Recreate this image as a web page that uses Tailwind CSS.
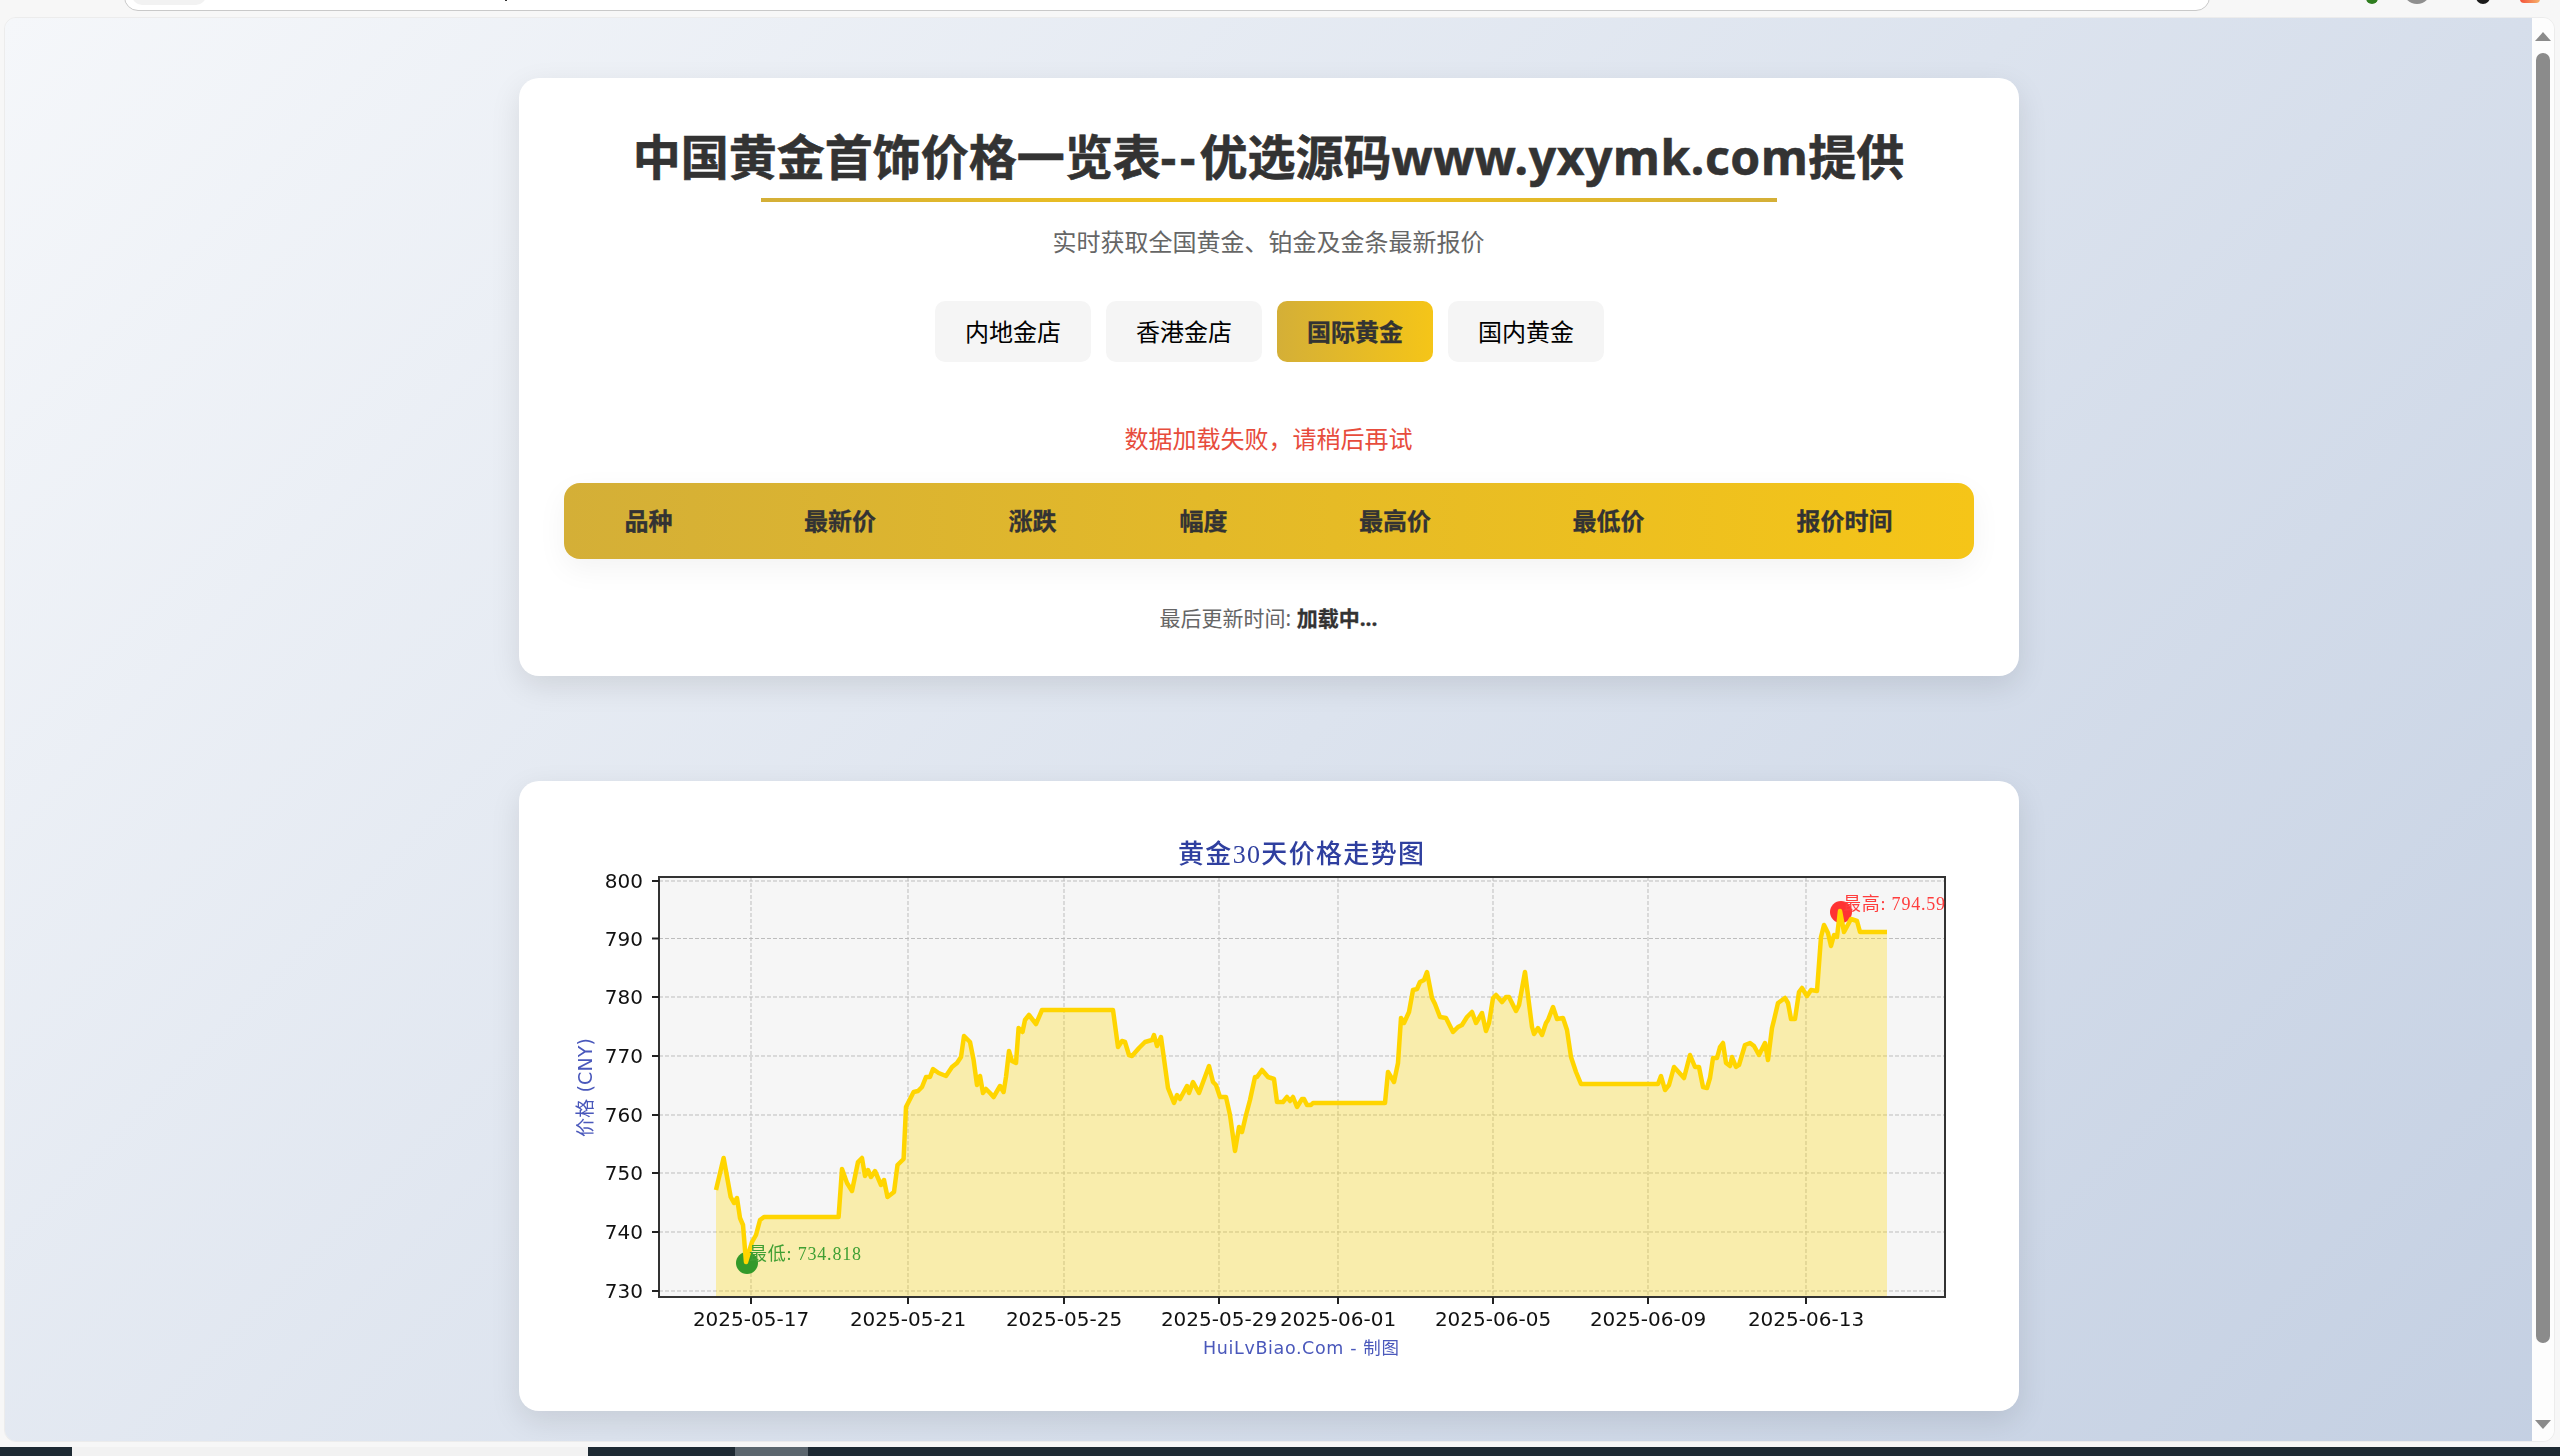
<!doctype html>
<html lang="zh-CN">
<head>
<meta charset="utf-8">
<title>中国黄金首饰价格一览表</title>
<script src="https://cdn.jsdelivr.net/npm/@tailwindcss/browser@4"></script>
</head>
<body class="h-screen overflow-hidden bg-[#f7f7f7] font-['Noto_Sans','Noto_Sans_CJK_SC',sans-serif]">
<div class="flex h-[1456px] w-[2560px] flex-col">
  <!-- browser chrome remnant -->
  <div class="relative h-[17px] shrink-0">
    <div class="absolute left-[124px] top-[-20px] h-[31px] w-[2086px] rounded-b-[14px] border-[1.5px] border-[#c9c9c9] bg-white"></div>
    <div class="absolute left-[132px] top-[-20px] h-[25px] w-[74px] rounded-b-[10px] bg-[#f2f2f2]"></div>
    <div class="absolute left-[505px] top-0 h-[1px] w-[2px] bg-[#333]"></div>
    <div class="absolute left-[2366px] top-[-8px] size-[12px] rounded-full bg-[#2f7d1f]"></div>
    <div class="absolute left-[2403px] top-[-24px] size-[28px] rounded-full bg-[#8f8f8f]"></div>
    <div class="absolute left-[2476px] top-[-10px] size-[14px] rounded-full bg-[#1b1b1b]"></div>
    <div class="absolute left-[2520px] top-[-6px] h-[9px] w-[20px] rounded-[4px] bg-[linear-gradient(90deg,#f4523b,#f6b26b)]"></div>
  </div>

  <!-- browser viewport -->
  <div class="ml-[4px] flex h-[1425px] w-[2551px] shrink-0 overflow-hidden rounded-[12px] border border-[#ececec]">
    <main class="h-[1513px] w-[2527px] shrink-0 self-start overflow-hidden bg-[linear-gradient(135deg,#f5f7fa_0%,#c3cfe2_100%)] pt-[60px]">
      <section class="mx-auto h-[598px] w-[1500px] rounded-[20px] bg-white px-[45px] pt-[43px] text-center shadow-[0_10px_30px_rgba(0,0,0,0.1)]">
        <h1 class="text-[48px] font-bold leading-[72px] text-[#333] [-webkit-text-stroke:0.6px_#333]">中国黄金首饰价格一览表<span class="tracking-[4px]">--</span>优选源码<span class="tracking-[0.6px]">www.yxymk.com</span>提供</h1>
        <div class="mx-auto mt-[5px] h-[4px] w-[1016px] bg-[linear-gradient(90deg,#d4af37,#f5c518,#d4af37)]"></div>
        <p class="mt-[22px] text-[24px] leading-[36px] text-[#666]">实时获取全国黄金、铂金及金条最新报价</p>
        <div class="mt-[41px] flex justify-center gap-[15px] pl-[2px]">
          <button class="h-[61px] w-[156px] rounded-[10px] bg-[#f5f5f5] text-[24px] text-black">内地金店</button>
          <button class="h-[61px] w-[156px] rounded-[10px] bg-[#f5f5f5] text-[24px] text-black">香港金店</button>
          <button class="h-[61px] w-[156px] rounded-[10px] bg-[linear-gradient(90deg,#d4af37,#f5c518)] text-[24px] font-bold text-[#333] [-webkit-text-stroke:0.3px_#333]">国际黄金</button>
          <button class="h-[61px] w-[156px] rounded-[10px] bg-[#f5f5f5] text-[24px] text-black">国内黄金</button>
        </div>
        <p class="mt-[59px] text-[24px] leading-[36px] text-[#e74c3c]">数据加载失败，请稍后再试</p>
        <div class="mt-[26px] overflow-hidden rounded-[16px] shadow-[0_10px_30px_rgba(0,0,0,0.05)]">
          <table class="w-full table-fixed border-collapse bg-[linear-gradient(90deg,#d4af37,#f5c518)]">
            <thead>
              <tr class="h-[76px] text-[24px] font-bold text-[#333] [-webkit-text-stroke:0.3px_#333]">
                <th class="w-[170px]">品种</th>
                <th class="w-[213px]">最新价</th>
                <th class="w-[172px]">涨跌</th>
                <th class="w-[170px]">幅度</th>
                <th class="w-[213px]">最高价</th>
                <th class="w-[214px]">最低价</th>
                <th class="w-[258px]">报价时间</th>
              </tr>
            </thead>
          </table>
        </div>
        <p class="mt-[43px] text-[21px] leading-[32px] text-[#666]">最后更新时间: <strong class="font-bold text-[#333] [-webkit-text-stroke:0.3px_#333]">加载中...</strong></p>
      </section>

      <section class="mx-auto mt-[105px] h-[630px] w-[1500px] overflow-hidden rounded-[20px] bg-white shadow-[0_10px_30px_rgba(0,0,0,0.1)]">
        <svg class="block h-[630px] w-[1500px] blur-[0.4px]" viewBox="519 781 1500 630" xmlns="http://www.w3.org/2000/svg">
          <rect x="659" y="877" width="1286" height="420" fill="#f6f6f6"/>
          <g stroke="#bdbdbd" stroke-width="1" stroke-dasharray="4 2">
            <path d="M659 881H1945M659 938.5H1945M659 997H1945M659 1056H1945M659 1115H1945M659 1173H1945M659 1232H1945M659 1291H1945"/>
            <path d="M751 877V1297M908 877V1297M1064 877V1297M1219 877V1297M1338 877V1297M1493 877V1297M1648 877V1297M1806 877V1297"/>
          </g>
          <polygon fill="#ffd700" fill-opacity="0.3" points="716,1297 716,1190 723.6,1158 730.7,1197 734,1203 737,1198 740,1218 743,1225 746,1262 752,1242 756,1235 760,1220 764,1217 838.6,1217 842,1169 847,1183 852,1191 858,1162 862,1158 865,1176 868,1170 871,1177 875,1171 881,1185 884,1180 887.5,1197 894,1192 897.5,1165 903.6,1159 906,1107 913.6,1092 918,1091 922,1087 926,1077 930,1077 933,1069 938.6,1073 946,1076 952,1067 957,1063 961,1057 964,1036 970,1042 973.6,1060 977,1085 980,1076 983,1093 986,1089 990,1093 993.6,1097 1000,1086 1003.6,1092 1006,1077 1009,1051 1012,1061 1016,1063 1018.6,1028 1022.5,1032 1025,1020 1029,1015 1036,1024 1042,1010 1113,1010 1118,1047 1122,1041 1125,1042 1129,1055 1132,1056 1139,1048 1145,1042 1152,1040 1154,1035 1157,1046 1161,1037 1168,1088 1174,1103 1177,1095 1180,1099 1187,1086 1189,1093 1193,1082 1199,1093 1209,1066 1213,1082 1216,1085 1220,1097 1226,1097 1230,1115 1235,1151 1239,1127 1242,1132 1246,1115 1250,1100 1255,1077 1257,1077 1262,1070 1268,1077 1274,1079 1277,1102 1283,1102 1287,1097 1290,1101 1293,1097 1297,1107 1302,1099 1304,1099 1307,1105 1311,1105 1313,1103 1385,1103 1388,1072 1394,1082 1398,1063 1401,1018 1404,1023 1409,1012 1413,990 1417,989 1420,982 1424,980 1427,972 1432,998 1435,1004 1440,1017 1446,1018 1453,1032 1458,1027 1462,1025 1467,1017 1472,1012 1476,1023 1482,1013 1486,1031 1489,1023 1493,998 1496,995 1502,1002 1506,997 1509,997 1516,1011 1519,1005 1525,972 1532,1027 1534,1034 1538,1028 1542,1035 1546,1023 1548,1020 1553,1007 1557,1019 1563,1018 1567,1030 1571,1057 1576,1072 1581,1084 1658,1084 1661,1076 1665,1090 1669,1085 1674,1067 1684,1078 1690,1055 1695,1067 1699,1067 1703,1087 1707,1088 1710,1078 1713,1058 1717,1058 1720,1047 1723,1043 1726,1063 1730,1066 1732,1057 1736,1067 1739,1065 1745,1045 1750,1043 1754,1046 1759,1055 1765,1043 1768,1060 1772,1028 1774,1020 1778,1003 1785,998 1788,1003 1791,1019 1795,1019 1799,992 1802,988 1807,996 1811,990 1817,991 1821,937 1824,925 1828,933 1831,946 1834,935 1837,937 1840,911 1844,932 1851,919 1857,921 1860,932 1887,932 1887,1297"/>
          <circle cx="747" cy="1263" r="11" fill="#339a2a"/>
          <circle cx="1841" cy="912" r="11" fill="#ff3333"/>
          <polyline fill="none" stroke="#ffd500" stroke-width="4.5" stroke-linejoin="round" points="716,1190 723.6,1158 730.7,1197 734,1203 737,1198 740,1218 743,1225 746,1262 752,1242 756,1235 760,1220 764,1217 838.6,1217 842,1169 847,1183 852,1191 858,1162 862,1158 865,1176 868,1170 871,1177 875,1171 881,1185 884,1180 887.5,1197 894,1192 897.5,1165 903.6,1159 906,1107 913.6,1092 918,1091 922,1087 926,1077 930,1077 933,1069 938.6,1073 946,1076 952,1067 957,1063 961,1057 964,1036 970,1042 973.6,1060 977,1085 980,1076 983,1093 986,1089 990,1093 993.6,1097 1000,1086 1003.6,1092 1006,1077 1009,1051 1012,1061 1016,1063 1018.6,1028 1022.5,1032 1025,1020 1029,1015 1036,1024 1042,1010 1113,1010 1118,1047 1122,1041 1125,1042 1129,1055 1132,1056 1139,1048 1145,1042 1152,1040 1154,1035 1157,1046 1161,1037 1168,1088 1174,1103 1177,1095 1180,1099 1187,1086 1189,1093 1193,1082 1199,1093 1209,1066 1213,1082 1216,1085 1220,1097 1226,1097 1230,1115 1235,1151 1239,1127 1242,1132 1246,1115 1250,1100 1255,1077 1257,1077 1262,1070 1268,1077 1274,1079 1277,1102 1283,1102 1287,1097 1290,1101 1293,1097 1297,1107 1302,1099 1304,1099 1307,1105 1311,1105 1313,1103 1385,1103 1388,1072 1394,1082 1398,1063 1401,1018 1404,1023 1409,1012 1413,990 1417,989 1420,982 1424,980 1427,972 1432,998 1435,1004 1440,1017 1446,1018 1453,1032 1458,1027 1462,1025 1467,1017 1472,1012 1476,1023 1482,1013 1486,1031 1489,1023 1493,998 1496,995 1502,1002 1506,997 1509,997 1516,1011 1519,1005 1525,972 1532,1027 1534,1034 1538,1028 1542,1035 1546,1023 1548,1020 1553,1007 1557,1019 1563,1018 1567,1030 1571,1057 1576,1072 1581,1084 1658,1084 1661,1076 1665,1090 1669,1085 1674,1067 1684,1078 1690,1055 1695,1067 1699,1067 1703,1087 1707,1088 1710,1078 1713,1058 1717,1058 1720,1047 1723,1043 1726,1063 1730,1066 1732,1057 1736,1067 1739,1065 1745,1045 1750,1043 1754,1046 1759,1055 1765,1043 1768,1060 1772,1028 1774,1020 1778,1003 1785,998 1788,1003 1791,1019 1795,1019 1799,992 1802,988 1807,996 1811,990 1817,991 1821,937 1824,925 1828,933 1831,946 1834,935 1837,937 1840,911 1844,932 1851,919 1857,921 1860,932 1887,932"/>
          <rect x="659" y="877" width="1286" height="420" fill="none" stroke="#333" stroke-width="2"/>
          <path stroke="#222" stroke-width="2" fill="none" d="M652 881H659M652 938.5H659M652 997H659M652 1056H659M652 1115H659M652 1173H659M652 1232H659M652 1291H659M751 1297V1304M908 1297V1304M1064 1297V1304M1219 1297V1304M1338 1297V1304M1493 1297V1304M1648 1297V1304M1806 1297V1304"/>
          <g fill="#111" font-family="'DejaVu Sans',sans-serif" font-size="20" text-anchor="end">
            <text x="643" y="888">800</text><text x="643" y="946">790</text><text x="643" y="1004">780</text><text x="643" y="1063">770</text><text x="643" y="1122">760</text><text x="643" y="1180">750</text><text x="643" y="1239">740</text><text x="643" y="1298">730</text>
          </g>
          <g fill="#111" font-family="'DejaVu Sans',sans-serif" font-size="20" text-anchor="middle">
            <text x="751" y="1326">2025-05-17</text><text x="908" y="1326">2025-05-21</text><text x="1064" y="1326">2025-05-25</text><text x="1219" y="1326">2025-05-29</text><text x="1338" y="1326">2025-06-01</text><text x="1493" y="1326">2025-06-05</text><text x="1648" y="1326">2025-06-09</text><text x="1806" y="1326">2025-06-13</text>
          </g>
          <text x="1178" y="863" fill="#2f3f9f" font-family="'Liberation Serif','Noto Sans CJK SC',serif" font-size="26" font-weight="500" textLength="246" lengthAdjust="spacing">黄金30天价格走势图</text>
          <text transform="translate(592 1137) rotate(-90)" fill="#4a58bb" font-family="'DejaVu Sans','Noto Sans CJK SC',sans-serif" font-size="19" textLength="99" lengthAdjust="spacing">价格 (CNY)</text>
          <text x="1203" y="1354" fill="#4a58bb" font-family="'DejaVu Sans','Noto Sans CJK SC',sans-serif" font-size="17.5" textLength="196" lengthAdjust="spacing">HuiLvBiao.Com - 制图</text>
          <text x="749" y="1260" fill="#3f9f33" font-family="'Liberation Serif','Noto Sans CJK SC',serif" font-size="18" textLength="112" lengthAdjust="spacing">最低: 734.818</text>
          <text x="1843" y="910" fill="#ff3d3d" font-family="'Liberation Serif','Noto Sans CJK SC',serif" font-size="18" textLength="102" lengthAdjust="spacing">最高: 794.59</text>
        </svg>
      </section>
    </main>

    <!-- scrollbar -->
    <div class="flex h-full w-[22px] shrink-0 flex-col items-center bg-[#fdfdfd] pt-[14px]">
      <svg class="block" width="16" height="9" viewBox="0 0 16 9"><path d="M8 0L16 9H0Z" fill="#8b8b8b"/></svg>
      <div class="mt-[12px] h-[1290px] w-[14px] rounded-[7px] bg-[#8b8b8b]"></div>
      <svg class="mt-[77px] block" width="16" height="9" viewBox="0 0 16 9"><path d="M0 0H16L8 9Z" fill="#8b8b8b"/></svg>
    </div>
  </div>

  <!-- taskbar remnant -->
  <div class="mt-[5px] flex h-[9px] shrink-0 bg-[#1e2a33]">
    <div class="ml-[72px] h-full w-[516px] bg-[#f2f2f2]"></div>
    <div class="ml-[147px] h-full w-[73px] bg-[#5b666e]"></div>
  </div>
</div>
</body>
</html>
